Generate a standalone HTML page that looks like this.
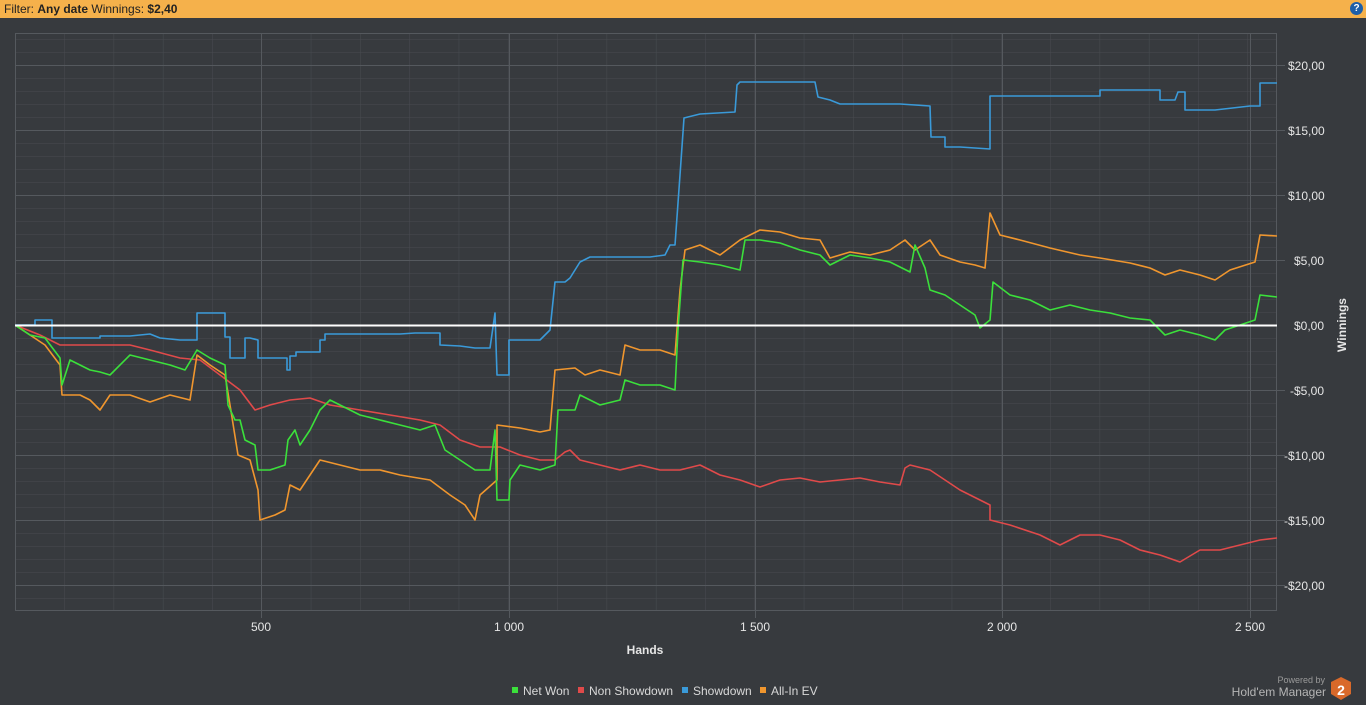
<!DOCTYPE html>
<html><head><meta charset="utf-8"><style>
html,body{margin:0;padding:0;width:1366px;height:705px;overflow:hidden;background:#373a3e;font-family:"Liberation Sans",sans-serif}
.top{position:absolute;left:0;top:0;width:1366px;height:18px;background:#f5b14b;font-size:12px;line-height:18px;color:#222}
.top span{padding-left:4px}
.help{position:absolute;right:3px;top:2px;width:13px;height:13px;border-radius:50%;background:#1e5fa8;color:#fff;font-size:10px;font-weight:bold;text-align:center;line-height:13px}
</style></head><body>
<div class="top"><span>Filter: <b>Any date</b> Winnings: <b>$2,40</b></span><div class="help">?</div></div>
<svg width="1366" height="705" style="position:absolute;left:0;top:0" xmlns="http://www.w3.org/2000/svg">
<defs>
<pattern id="g" patternUnits="userSpaceOnUse" x="15" y="0" width="49.3" height="13">
<path d="M0 0H49.3M0 0V13" stroke="#484b50" stroke-width="1" fill="none"/>
</pattern>
<clipPath id="c"><rect x="15" y="33" width="1262" height="578"/></clipPath>
</defs>
<rect x="15" y="33" width="1262" height="578" fill="#373a3e"/>
<g clip-path="url(#c)"><rect x="15" y="33" width="1262" height="578" fill="url(#g)"/></g>
<g stroke="#55595e" stroke-width="1">
<path d="M15 65.5H1285M15 130.5H1285M15 195.5H1285M15 260.5H1285M15 390.5H1285M15 455.5H1285M15 520.5H1285M15 585.5H1285"/>
<path d="M261.5 33V618M509.5 33V618M755.5 33V618M1002.5 33V618M1250.5 33V618"/>
</g>
<rect x="15.5" y="33.5" width="1261" height="577" fill="none" stroke="#55595e"/>
<g fill="none" stroke-width="1.6" stroke-linejoin="round" clip-path="url(#c)">
<polyline stroke="#e04a4a" points="15,325 40,335 60,345 80,345 100,345 130,345 150,350 180,358 200,360 220,375 240,390 255,410 270,405 290,400 310,398 330,405 360,410 390,415 420,420 440,425 460,440 480,447 500,447 520,455 540,460 555,460 565,452 570,450 580,460 600,465 620,470 640,465 660,470 680,470 700,465 720,475 740,480 760,487 780,480 800,478 820,482 840,480 860,478 880,482 900,485 905,468 910,465 930,470 960,490 980,500 990,505 990,520 1010,525 1040,535 1060,545 1080,535 1100,535 1120,540 1140,550 1160,555 1180,562 1200,550 1220,550 1240,545 1260,540 1277,538"/>
<polyline stroke="#3a9ad9" points="15,325 35,325 35,320 52,320 52,338 100,338 100,336 130,336 150,334 160,338 180,340 197,340 197,313 225,313 225,337 230,337 230,358 245,358 245,338 250,338 258,340 258,358 287,358 287,370 290,370 290,356 296,356 296,352 320,352 320,340 325,340 325,334 400,334 415,333 440,333 440,345 460,346 475,348 490,348 495,313 497,375 509,375 509,340 540,340 550,330 555,282 565,282 570,278 580,262 590,257 650,257 665,255 670,245 675,245 680,175 684,118 700,114 735,112 737,85 740,82 815,82 818,97 830,100 840,104 900,104 930,106 931,137 945,137 945,147 960,147 975,148 990,149 990,96 1100,96 1100,90 1160,90 1160,100 1175,100 1178,92 1185,92 1185,110 1215,110 1250,106 1260,106 1260,83 1277,83"/>
<polyline stroke="#f0962e" points="15,325 30,335 45,345 60,365 62,395 80,395 90,400 100,410 110,395 130,395 150,402 170,395 190,400 197,355 210,365 225,375 230,405 238,455 250,460 258,490 260,520 275,515 285,510 290,485 300,490 310,475 320,460 340,465 360,470 380,470 400,475 430,480 450,495 465,505 475,520 480,495 497,480 497,425 520,428 540,432 550,430 555,370 575,368 585,375 600,370 620,375 625,345 640,350 660,350 675,355 680,290 685,250 700,245 720,255 740,240 760,230 780,232 800,238 820,240 830,258 850,252 870,255 890,250 905,240 915,250 930,240 940,255 960,262 975,265 985,268 990,213 1000,235 1020,240 1050,248 1080,255 1100,258 1130,263 1150,268 1165,275 1180,270 1200,275 1215,280 1230,270 1255,262 1260,235 1277,236"/>
<polyline stroke="#3be03b" points="15,325 30,335 45,338 60,358 62,385 70,360 80,365 90,370 100,372 110,375 130,355 150,360 170,365 185,370 197,350 210,358 225,365 228,405 235,420 240,420 245,440 255,445 258,470 270,470 285,465 288,440 295,430 300,445 310,430 320,410 330,400 340,405 360,415 380,420 400,425 420,430 435,425 445,450 460,460 475,470 490,470 495,430 497,500 509,500 510,480 520,465 540,470 555,465 558,410 575,410 580,395 600,405 620,400 625,380 640,385 660,385 675,390 678,330 683,260 700,262 720,265 740,270 745,240 760,240 780,243 800,250 820,255 830,265 850,255 870,258 890,262 910,272 915,245 925,268 930,290 945,295 960,305 975,315 980,328 990,320 993,282 1010,295 1030,300 1050,310 1070,305 1090,310 1110,313 1130,318 1150,320 1165,335 1180,330 1200,335 1215,340 1225,330 1240,325 1255,320 1260,295 1277,297"/>
</g>
<path d="M15 325.5H1277" stroke="#fff" stroke-width="2"/>
<g fill="#e6e6e6" font-size="12" font-family="Liberation Sans,sans-serif">
<text x="1288" y="70">$20,00</text><text x="1288" y="135">$15,00</text><text x="1288" y="200">$10,00</text><text x="1294" y="265">$5,00</text><text x="1294" y="330">$0,00</text><text x="1290" y="395">-$5,00</text><text x="1284" y="460">-$10,00</text><text x="1284" y="525">-$15,00</text><text x="1284" y="590">-$20,00</text>
<g text-anchor="middle"><text x="261" y="631">500</text><text x="509" y="631">1 000</text><text x="755" y="631">1 500</text><text x="1002" y="631">2 000</text><text x="1250" y="631">2 500</text></g>
<text x="645" y="654" text-anchor="middle" font-weight="bold">Hands</text>
<text transform="translate(1346,325) rotate(-90)" text-anchor="middle" font-weight="bold">Winnings</text>
</g>
<g font-size="12" fill="#d8d8d8" font-family="Liberation Sans,sans-serif">
<rect x="512" y="687" width="6" height="6" fill="#3be03b"/><text x="523" y="695">Net Won</text>
<rect x="578" y="687" width="6" height="6" fill="#e04a4a"/><text x="589" y="695">Non Showdown</text>
<rect x="682" y="687" width="6" height="6" fill="#3a9ad9"/><text x="693" y="695">Showdown</text>
<rect x="760" y="687" width="6" height="6" fill="#f0962e"/><text x="771" y="695">All-In EV</text>
</g>
<text x="1325" y="683" font-size="9" fill="#9a9a9a" text-anchor="end" font-family="Liberation Sans,sans-serif">Powered by</text>
<text x="1326" y="696" font-size="12" fill="#b5b5b5" text-anchor="end" font-family="Liberation Sans,sans-serif">Hold'em Manager</text>
<polygon points="1341,677 1351,682 1351,694 1341,700 1331,694 1331,682" fill="#d9692a"/>
<text x="1341" y="695" font-size="14" font-weight="bold" fill="#fff" text-anchor="middle" font-family="Liberation Sans,sans-serif">2</text>
</svg>
</body></html>
